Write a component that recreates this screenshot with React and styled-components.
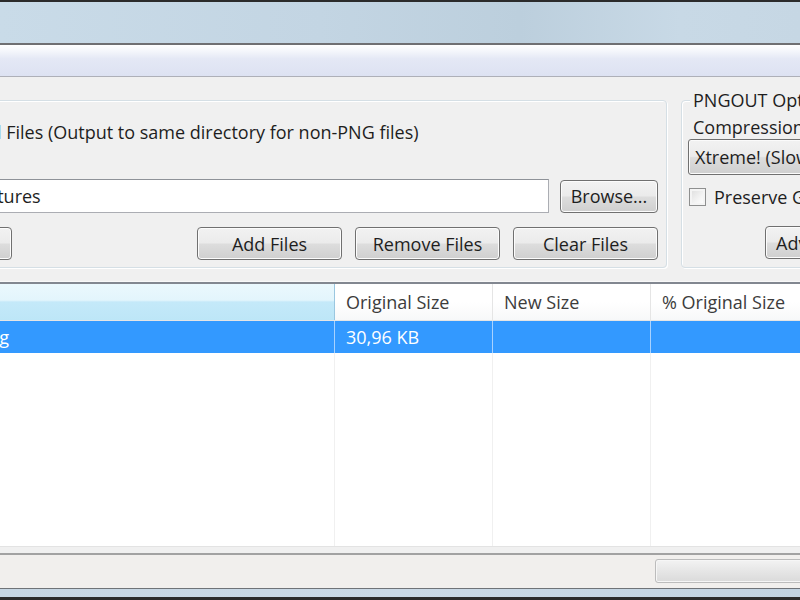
import React from 'react';
import styled, { createGlobalStyle } from 'styled-components';

const GlobalStyle = createGlobalStyle`
  html, body {
    margin: 0;
    padding: 0;
    background: #f0f0f0;
  }
  body {
    font-family: 'Open Sans', 'Noto Sans', sans-serif;
    font-size: 18px;
    color: #1e1e1e;
  }
`;

function App() {
  return (
    <Window>
      <GlobalStyle />
      {/* Barra de título e menu (cortados) */}
      <TitleBar />
      <MenuBar />

      <Panel>
        {/* Grupo da esquerda: arquivos */}
        <FilesGroup>
          <GroupText>All Files (Output to same directory for non-PNG files)</GroupText>
          <PathRow>
            <PathInput>C:\Users\Public\Pictures</PathInput>
            <Button $w={98}>Browse...</Button>
          </PathRow>
          <ButtonRow>
            <Button $w={145} $push>Options</Button>
            <Button $w={145}>Add Files</Button>
            <Button $w={145}>Remove Files</Button>
            <Button $w={145}>Clear Files</Button>
          </ButtonRow>
        </FilesGroup>

        {/* Grupo da direita: opções do PNGOUT */}
        <OptionsGroup>
          <Legend>PNGOUT Options</Legend>
          <OptionLabel>Compression</OptionLabel>
          <Select>Xtreme! (Slow)</Select>
          <CheckRow>
            <CheckBox />
            <span>Preserve Gamma</span>
          </CheckRow>
          <Button $w={145} $align>Advanced</Button>
        </OptionsGroup>
      </Panel>

      {/* Lista de arquivos */}
      <ListView>
        <HeaderRow>
          <HeaderCell $w={400} $hot>Name</HeaderCell>
          <HeaderCell $w={158}>Original Size</HeaderCell>
          <HeaderCell $w={158}>New Size</HeaderCell>
          <HeaderCell $w={158}>% Original Size</HeaderCell>
        </HeaderRow>
        <Row $selected>
          <NameCell $w={400}><span>image.png</span></NameCell>
          <Cell $w={158} $selected>30,96 KB</Cell>
          <Cell $w={158} $selected></Cell>
          <Cell $w={158} $selected></Cell>
        </Row>
        <EmptyArea>
          <EmptyColumn $w={400} />
          <EmptyColumn $w={158} />
          <EmptyColumn $w={158} />
          <EmptyColumn $w={158} />
        </EmptyArea>
      </ListView>

      {/* Barra de status com progresso */}
      <StatusBar>
        <Progress />
      </StatusBar>
      <BottomFrame />
    </Window>
  );
}

export default App;

const Window = styled.div`
  width: 800px;
  height: 600px;
  overflow: hidden;
  display: flex;
  flex-direction: column;
  background: #f0f0f0;
  border-top: 2px solid #2b2b2b;
  box-sizing: border-box;
`;

const TitleBar = styled.div`
  height: 41px;
  flex-shrink: 0;
  background: linear-gradient(90deg, #c9dbe8 0%, #c3d5e3 40%, #bccfdd 65%, #c8d9e6 85%, #c6d7e4 100%);
  border-bottom: 2px solid #6f6f72;
`;

const MenuBar = styled.div`
  height: 31px;
  flex-shrink: 0;
  background: linear-gradient(180deg, #ffffff 0%, #f4f6fb 20%, #e4e8f5 45%, #dde2f2 100%);
  border-bottom: 1px solid #aeb0b8;
`;

const Panel = styled.div`
  height: 205px;
  flex-shrink: 0;
  display: flex;
  align-items: flex-start;
  gap: 14px;
  padding-top: 23px;
  box-sizing: border-box;
  border-bottom: 1px solid #f8f8f8;
`;

const Group = styled.div`
  position: relative;
  height: 168px;
  box-sizing: border-box;
  border: 1px solid #d5dfe5;
  border-radius: 4px;
  box-shadow: inset 1px 1px 0 #ffffff, 1px 1px 0 #ffffff;
`;

const FilesGroup = styled(Group)`
  width: 720px;
  margin-left: -53px;
  flex-shrink: 0;
  padding: 18px 8px 0 33px;
  display: flex;
  flex-direction: column;
`;

const GroupText = styled.div`
  height: 26px;
  line-height: 26px;
  white-space: nowrap;
`;

const PathRow = styled.div`
  display: flex;
  align-items: center;
  justify-content: space-between;
  margin-top: 34px;
  margin-left: -147px;
`;

const PathInput = styled.div`
  width: 715px;
  height: 34px;
  box-sizing: border-box;
  background: #ffffff;
  border: 1px solid #abadb3;
  border-top-color: #8e9298;
  line-height: 32px;
  padding-left: 4px;
  white-space: nowrap;
  overflow: hidden;
`;

const ButtonRow = styled.div`
  display: flex;
  gap: 13px;
  margin-top: 14px;
  margin-left: -114px;
`;

const Button = styled.div`
  width: ${p => p.$w}px;
  height: 33px;
  flex-shrink: 0;
  box-sizing: border-box;
  border: 1px solid #707070;
  border-radius: 4px;
  background: linear-gradient(180deg, #f2f2f2 0%, #ebebeb 48%, #dddddd 52%, #cfcfcf 100%);
  box-shadow: inset 0 0 0 1px #fcfcfc;
  display: flex;
  align-items: center;
  justify-content: center;
  white-space: nowrap;
  ${p => p.$push && 'margin-right: auto;'}
  ${p => p.$align && 'align-self: flex-start; margin-left: 77px; margin-top: 17px; justify-content: flex-start; padding-left: 10px;'}
`;

const OptionsGroup = styled(Group)`
  flex: 1;
  min-width: 300px;
  padding: 13px 0 0 6px;
  display: flex;
  flex-direction: column;
`;

const Legend = styled.div`
  position: absolute;
  top: -14px;
  left: 8px;
  padding: 0 4px 0 3px;
  background: #f0f0f0;
  line-height: 26px;
  white-space: nowrap;
`;

const OptionLabel = styled.div`
  line-height: 26px;
  margin-left: 5px;
  white-space: nowrap;
`;

const Select = styled.div`
  width: 260px;
  height: 36px;
  margin-top: -1px;
  box-sizing: border-box;
  border: 1px solid #707070;
  border-radius: 3px;
  background: linear-gradient(180deg, #f2f2f2 0%, #ebebeb 48%, #dddddd 52%, #cfcfcf 100%);
  box-shadow: inset 0 0 0 1px #fbfbfb;
  line-height: 34px;
  padding-left: 6px;
  white-space: nowrap;
`;

const CheckRow = styled.div`
  display: flex;
  align-items: center;
  gap: 8px;
  margin-top: 10px;
  white-space: nowrap;
`;

const CheckBox = styled.div`
  width: 17px;
  height: 18px;
  margin-left: 1px;
  box-sizing: border-box;
  border: 1px solid #8e8f8f;
  background: linear-gradient(135deg, #dcdcdc 0%, #f4f4f4 60%, #ffffff 100%);
  box-shadow: inset 0 0 0 2px #f4f4f4;
`;

const ListView = styled.div`
  margin-left: -65px;
  height: 262px;
  flex-shrink: 0;
  display: flex;
  flex-direction: column;
  background: #ffffff;
  border-top: 2px solid #828790;
  border-bottom: 1px solid #e3e3e3;
`;

const HeaderRow = styled.div`
  display: flex;
  height: 36px;
  flex-shrink: 0;
  border-bottom: 1px solid #e5e5e5;
`;

const HeaderCell = styled.div`
  width: ${p => p.$w}px;
  flex-shrink: 0;
  box-sizing: border-box;
  padding-left: 11px;
  line-height: 36px;
  white-space: nowrap;
  border-right: 1px solid ${p => (p.$hot ? '#9ac7e0' : '#e5e5e5')};
  color: ${p => (p.$hot ? 'transparent' : '#3c3c3c')};
  background: ${p =>
    p.$hot
      ? 'linear-gradient(180deg, #eaf8fd 0%, #e3f5fc 45%, #c4e9f9 50%, #bde6f7 100%)'
      : 'linear-gradient(180deg, #ffffff 0%, #ffffff 50%, #f7f8f9 100%)'};
`;

const Row = styled.div`
  display: flex;
  height: 32px;
  flex-shrink: 0;
  background: ${p => (p.$selected ? '#3399ff' : '#ffffff')};
`;

const Cell = styled.div`
  width: ${p => p.$w}px;
  flex-shrink: 0;
  box-sizing: border-box;
  padding-left: 11px;
  line-height: 32px;
  white-space: nowrap;
  overflow: hidden;
  color: ${p => (p.$selected ? '#ffffff' : '#1e1e1e')};
  border-right: 1px solid ${p => (p.$selected ? '#a8d2ff' : '#f0f0f0')};
`;

// Nome do arquivo: alinhado ao fim para que só o final apareça na tela
const NameCell = styled(Cell)`
  display: flex;
  justify-content: flex-end;
  padding-left: 0;
  padding-right: 325px;
  color: #ffffff;
  border-right-color: #a8d2ff;
  overflow: visible;
`;

const EmptyArea = styled.div`
  flex: 1;
  display: flex;
`;

const EmptyColumn = styled.div`
  width: ${p => p.$w}px;
  flex-shrink: 0;
  box-sizing: border-box;
  border-right: 1px solid #f0f0f0;
`;

const StatusBar = styled.div`
  margin-top: 6px;
  height: 35px;
  flex-shrink: 0;
  box-sizing: border-box;
  border-top: 2px solid #a2a2a2;
  background: #f1efed;
  display: flex;
  justify-content: flex-end;
  padding-top: 4px;
`;

const Progress = styled.div`
  width: 160px;
  height: 24px;
  margin-right: -15px;
  box-sizing: border-box;
  border: 1px solid #bcbcbc;
  border-radius: 3px;
  background: linear-gradient(180deg, #f3f3f3 0%, #e6e6e6 50%, #dadada 100%);
  box-shadow: inset 0 0 0 1px #f6f6f6;
`;

const BottomFrame = styled.div`
  flex: 1;
  border-top: 1px solid #6f7378;
  background: linear-gradient(90deg, #c6d6e3 0%, #cad9e6 50%, #c2d3e1 100%);
  border-bottom: 3px solid #2b2b2b;
`;
